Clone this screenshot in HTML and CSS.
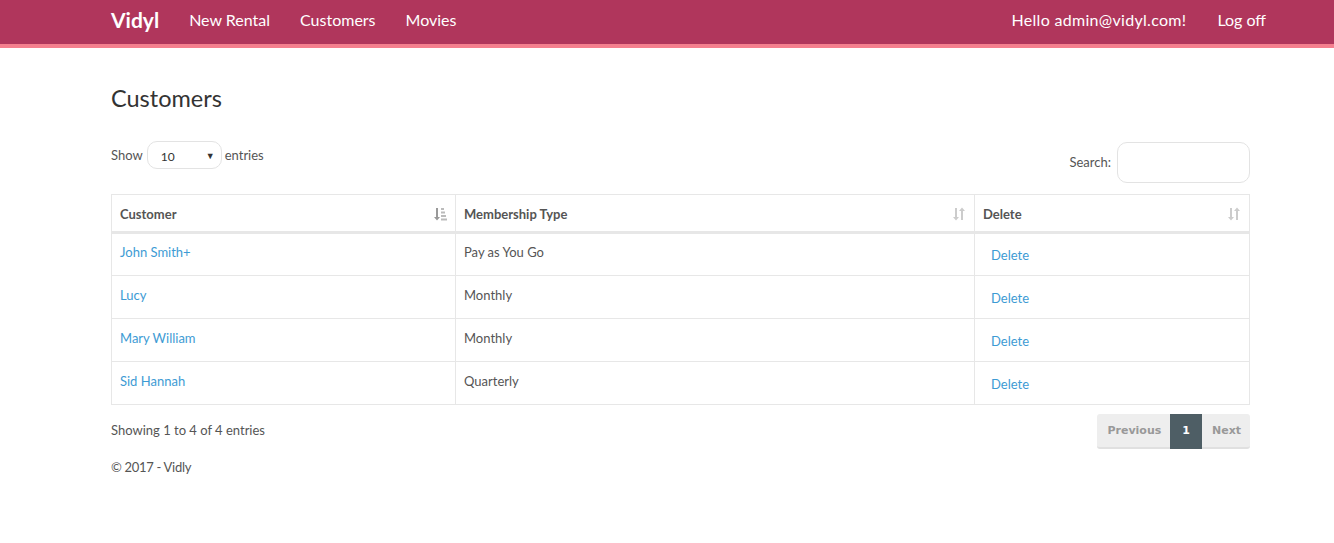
FILE: index.html
```html
<!DOCTYPE html>
<html>
<head>
<meta charset="utf-8">
<title>Customers - Vidly</title>
<link rel="stylesheet" href="styles.css">
</head>
<body>
<nav class="navbar">
  <div class="nav-inner">
    <a class="brand" href="#">Vidyl</a>
    <ul class="nav-left">
      <li><a href="#">New Rental</a></li>
      <li><a href="#">Customers</a></li>
      <li><a href="#">Movies</a></li>
    </ul>
    <ul class="nav-right">
      <li><a class="hello" href="#">Hello admin@vidyl.com!</a></li>
      <li><a href="#">Log off</a></li>
    </ul>
  </div>
</nav>
<main class="container">
  <h2 class="title">Customers</h2>
  <div class="dt-top">
    <div class="dt-length">Show
      <span class="select"><span class="sel-val">10</span><span class="caret">▼</span></span>
      entries</div>
    <div class="dt-search">Search: <span class="search-box"></span></div>
  </div>
  <table class="table">
    <thead>
      <tr>
        <th class="c1">Customer<svg class="sort" width="14" height="14" viewBox="0 0 14 14"><path d="M3 1h2v9h2l-3 3.5-3-3.5h2z" fill="#999"/><rect x="8" y="1" width="3" height="2" fill="#bbb"/><rect x="8" y="4.5" width="4" height="2" fill="#bbb"/><rect x="8" y="8" width="5" height="2" fill="#bbb"/><rect x="8" y="11.5" width="6" height="2" fill="#bbb"/></svg></th>
        <th class="c2">Membership Type<svg class="sort" width="14" height="14" viewBox="0 0 14 14"><path d="M3 1h2v9h2l-3 3.5-3-3.5h2z" fill="#ccc"/><path d="M9 13h2V4h2L10 0.5 7 4h2z" fill="#ccc"/></svg></th>
        <th class="c3">Delete<svg class="sort" width="14" height="14" viewBox="0 0 14 14"><path d="M3 1h2v9h2l-3 3.5-3-3.5h2z" fill="#ccc"/><path d="M9 13h2V4h2L10 0.5 7 4h2z" fill="#ccc"/></svg></th>
      </tr>
    </thead>
    <tbody>
      <tr><td><a href="#">John Smith+</a></td><td>Pay as You Go</td><td><a class="del" href="#">Delete</a></td></tr>
      <tr><td><a href="#">Lucy</a></td><td>Monthly</td><td><a class="del" href="#">Delete</a></td></tr>
      <tr><td><a href="#">Mary William</a></td><td>Monthly</td><td><a class="del" href="#">Delete</a></td></tr>
      <tr><td><a href="#">Sid Hannah</a></td><td>Quarterly</td><td><a class="del" href="#">Delete</a></td></tr>
    </tbody>
  </table>
  <div class="dt-bottom">
    <div class="info">Showing 1 to 4 of 4 entries</div>
    <ul class="pagination">
      <li class="disabled">Previous</li>
      <li class="active">1</li>
      <li class="disabled">Next</li>
    </ul>
  </div>
  <footer class="footer">© 2017 - Vidly</footer>
</main>
</body>
</html>
```
FILE: styles.css
```css
* { box-sizing: border-box; }
html, body { margin: 0; padding: 0; }
body {
  font-family: Lato, "Liberation Sans", sans-serif;
  font-size: 14px;
  color: #555;
  background: #fff;
}
a { text-decoration: none; }
ul { list-style: none; margin: 0; padding: 0; }

.navbar {
  background: #b0365c;
  border-bottom: 4px solid #f47f8e;
  height: 48px;
}
.nav-inner {
  display: flex;
  align-items: center;
  height: 44px;
  padding-left: 111px;
  padding-right: 68px;
  padding-bottom: 5px;
}
.navbar a { color: #fff; }
.brand { font-weight: 700; font-size: 21px; margin-right: 30px; }
.nav-left, .nav-right { display: flex; font-size: 16px; }
.nav-left li { margin-right: 30px; }
.nav-right { margin-left: auto; }
.nav-right li { margin-left: 31px; }
.hello { letter-spacing: 0.3px; }

.container {
  padding-left: 111px;
  width: 1250px;
}
.title {
  font-weight: 400;
  font-size: 23.5px;
  color: #333;
  margin: 37px 0 0 0;
  line-height: 26px;
}
.dt-top {
  display: flex;
  justify-content: space-between;
  margin-top: 31px;
  height: 52px;
}
.dt-length { display: flex; align-items: center; height: 26px; font-size: 13px; }
.select {
  display: inline-flex;
  align-items: center;
  justify-content: space-between;
  width: 75px;
  height: 28px;
  border: 1px solid #e3e3e3;
  border-radius: 10px;
  margin: 0 3px 0 4px;
  padding: 0 6px 0 13px;
  font-size: 12px;
  color: #333;
}
.sel-val { padding-top: 3px; }
.caret { font-size: 9px; color: #333; }
.dt-search { display: flex; align-items: center; font-size: 13px; height: 40px; }
.search-box {
  display: inline-block;
  width: 133px;
  height: 41px;
  border: 1px solid #e3e3e3;
  border-radius: 10px;
  margin-left: 6px;
}

.table {
  width: 1139px;
  border-collapse: collapse;
  border: 1px solid #e7e7e7;
}
.table th, .table td {
  border: 1px solid #e7e7e7;
  text-align: left;
  padding: 0 8px;
  font-size: 13px;
}
.table th {
  height: 38px;
  font-weight: 700;
  color: #555;
  border-bottom: 3px solid #e7e7e7;
  position: relative;
  padding-top: 1px;
}
.c1 { width: 344px; }
.c2 { width: 519px; }
.sort { position: absolute; right: 8px; top: 12px; }
.table td { height: 43px; padding-bottom: 5px; }
.table a { color: #3d9bd4; }
.table a.del { margin-left: 8px; position: relative; top: 3px; }

.dt-bottom {
  display: flex;
  justify-content: space-between;
  align-items: flex-start;
  margin-top: 9px;
}
.info { font-size: 13px; padding-top: 8px; }
.pagination { display: flex; }
.pagination li {
  font-family: "DejaVu Sans", Verdana, sans-serif;
  font-size: 11px;
  font-weight: 700;
  height: 35px;
  line-height: 33px;
  padding: 0 9px 0 10px;
  background: #eee;
  color: #999;
  border-bottom: 2px solid #e0e0e0;
}
.pagination li:first-child { border-radius: 3px 0 0 3px; }
.pagination li:last-child { border-radius: 0 3px 3px 0; }
.pagination li.active { background: #4e5e65; color: #fff; border-bottom-color: #4e5e65; padding: 0 12px; }
.footer { font-size: 13px; margin-top: 10px; letter-spacing: -0.3px; }
```
